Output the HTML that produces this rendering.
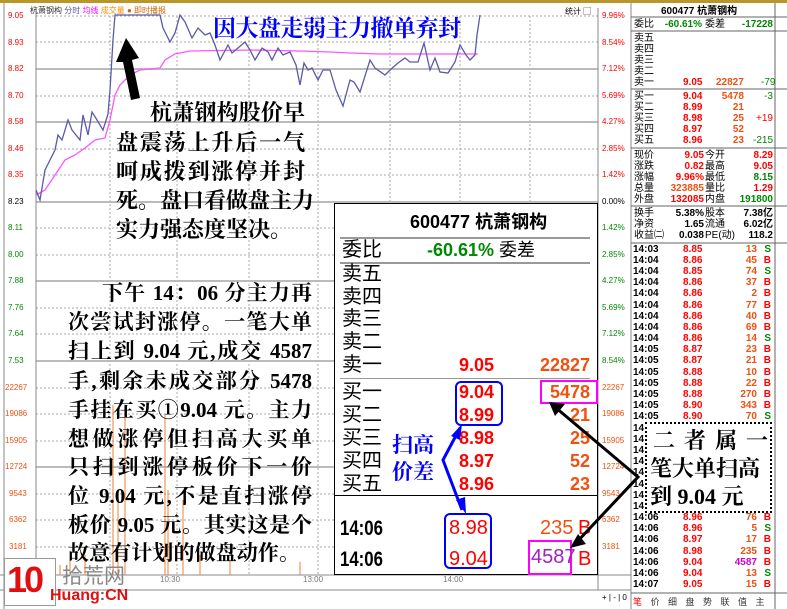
<!DOCTYPE html>
<html><head><meta charset="utf-8"><style>
*{margin:0;padding:0;box-sizing:border-box}
body{width:787px;height:609px;overflow:hidden;background:#fff;position:relative;font-family:"Liberation Sans","Noto Sans CJK SC",sans-serif}
.a{position:absolute;white-space:nowrap}
.ax{position:absolute;font-size:8px;font-family:"Liberation Sans",sans-serif}
.rp{position:absolute;font-size:10px;font-weight:bold;line-height:11px;white-space:nowrap}
.sv{font-family:"Liberation Serif","Noto Serif CJK SC",serif;font-weight:bold;color:#000}
.ln{position:absolute;font-size:22px;line-height:24px;text-align:justify;text-align-last:justify;white-space:nowrap}
.p2{font-size:21px}
.r{color:#f00}.o{color:#f05010}.g{color:#080}
.ob{position:absolute;font-size:20px;line-height:22px;height:22px;white-space:nowrap}
.op{position:absolute;font-size:18px;line-height:22px;font-weight:bold;white-space:nowrap}
table.t{position:absolute;left:633px;top:244px;border-collapse:collapse;font-size:10px;font-weight:bold}
table.t td{height:11.2px;line-height:10px;padding:0;white-space:nowrap}
</style></head><body>
<div class="a" style="left:0;top:0;width:787px;height:3px;background:#b8962a"></div>
<svg class="a" style="left:0;top:0" width="787" height="609">
<g stroke="#aaa" stroke-dasharray="2,2" stroke-width="1">
<line x1="36" y1="16" x2="598" y2="16"/><line x1="36" y1="42" x2="598" y2="42"/><line x1="36" y1="96" x2="598" y2="96"/><line x1="36" y1="149" x2="598" y2="149"/><line x1="36" y1="175" x2="598" y2="175"/><line x1="36" y1="228" x2="598" y2="228"/><line x1="36" y1="255" x2="598" y2="255"/><line x1="36" y1="308" x2="598" y2="308"/><line x1="36" y1="334" x2="598" y2="334"/><line x1="36" y1="388" x2="598" y2="388"/><line x1="36" y1="414" x2="598" y2="414"/><line x1="36" y1="441" x2="598" y2="441"/><line x1="36" y1="494" x2="598" y2="494"/><line x1="36" y1="520" x2="598" y2="520"/><line x1="36" y1="547" x2="598" y2="547"/>
<line x1="110" y1="16" x2="110" y2="575"/><line x1="177" y1="16" x2="177" y2="575"/><line x1="249" y1="16" x2="249" y2="575"/><line x1="318" y1="16" x2="318" y2="575"/><line x1="390" y1="16" x2="390" y2="575"/><line x1="460" y1="16" x2="460" y2="575"/><line x1="530" y1="16" x2="530" y2="575"/>
</g>
<g stroke="#bbb" stroke-width="2"><line x1="36" y1="69" x2="598" y2="69"/><line x1="36" y1="122" x2="598" y2="122"/><line x1="36" y1="202" x2="598" y2="202"/><line x1="36" y1="281" x2="598" y2="281"/><line x1="36" y1="361" x2="598" y2="361"/><line x1="36" y1="467" x2="598" y2="467"/></g>
<line x1="36" y1="8" x2="36" y2="590" stroke="#888"/><line x1="598" y1="8" x2="598" y2="590" stroke="#888"/>
<line x1="0" y1="575" x2="631" y2="575" stroke="#888"/><line x1="0" y1="590" x2="631" y2="590" stroke="#888"/>
<line x1="631" y1="3" x2="631" y2="609" stroke="#888"/><line x1="4" y1="3" x2="4" y2="609" stroke="#888"/>
<g stroke="#f08030" stroke-width="1">
<line x1="60" y1="575" x2="60" y2="565"/><line x1="70" y1="575" x2="70" y2="560"/><line x1="85" y1="575" x2="85" y2="555"/><line x1="113" y1="575" x2="113" y2="405"/><line x1="118" y1="575" x2="118" y2="500"/><line x1="125" y1="575" x2="125" y2="410"/><line x1="165" y1="575" x2="165" y2="415"/><line x1="168" y1="575" x2="168" y2="490"/><line x1="183" y1="575" x2="183" y2="500"/><line x1="200" y1="575" x2="200" y2="555"/><line x1="230" y1="575" x2="230" y2="560"/><line x1="300" y1="575" x2="300" y2="562"/>
</g>
<polyline fill="none" stroke="#ff55ff" stroke-width="1.3" points="36,195 45,190 55,175 65,160 75,155 85,148 95,140 105,138 110,120 115,95 120,85 125,80 130,75 140,70 160,68 165,60 175,54 190,51 250,50 300,51 330,52 350,53 380,54 420,54 478,54"/>
<polyline fill="none" stroke="#5a5aaa" stroke-width="1.3" points="36,190 40,200 45,170 50,160 55,150 58,135 62,140 68,120 72,130 80,140 83,115 88,135 92,112 97,120 103,130 108,114 110,90 113,40 115,15 160,15 163,28 170,42 175,33 180,15 185,22 192,38 198,28 205,35 210,33 215,45 220,60 228,45 232,53 238,48 245,42 250,50 255,60 262,48 268,52 272,60 278,48 283,55 290,52 296,65 300,85 304,63 308,70 312,68 318,80 323,70 330,70 336,90 343,106 350,80 354,82 360,92 370,60 375,68 385,75 390,70 398,63 405,58 410,62 418,62 424,43 430,70 435,58 440,72 448,73 455,62 460,45 466,55 470,60 475,55 477,35 480,15"/>
<polygon points="126,38 116,62 123,62 131,100 140,98 132,60 139,58" fill="#000"/>
<g stroke="#666"><line x1="631" y1="17" x2="787" y2="17"/><line x1="631" y1="31" x2="787" y2="31"/><line x1="631" y1="89" x2="787" y2="89"/><line x1="631" y1="148" x2="787" y2="148"/><line x1="631" y1="206" x2="787" y2="206"/><line x1="631" y1="243" x2="787" y2="243"/><line x1="631" y1="593" x2="787" y2="593"/><line x1="775" y1="3" x2="775" y2="609"/></g>
</svg>
<div class="a" style="left:30px;top:5px;font-size:8px;color:#333">杭萧钢构 <span style="color:#55a">分时</span> <span style="color:#f0f">均线</span> <span style="color:#f80">成交量</span> <span style="color:#c60">● 即时播报</span></div>
<div class="a" style="left:565px;top:6px;font-size:8px">统计 ▢</div>
<div class="ax r" style="left:8px;top:11px">9.05</div><div class="ax r" style="left:8px;top:38px">8.93</div><div class="ax r" style="left:8px;top:64px">8.82</div><div class="ax r" style="left:8px;top:91px">8.70</div><div class="ax r" style="left:8px;top:117px">8.58</div><div class="ax r" style="left:8px;top:144px">8.46</div><div class="ax r" style="left:8px;top:170px">8.35</div><div class="ax" style="left:8px;top:197px">8.23</div><div class="ax g" style="left:8px;top:223px">8.11</div><div class="ax g" style="left:8px;top:250px">8.00</div><div class="ax g" style="left:8px;top:276px">7.88</div><div class="ax g" style="left:8px;top:303px">7.76</div><div class="ax g" style="left:8px;top:329px">7.64</div><div class="ax g" style="left:8px;top:356px">7.53</div>
<div class="ax o" style="left:5px;top:383px">22267</div><div class="ax o" style="left:5px;top:409px">19086</div><div class="ax o" style="left:5px;top:436px">15905</div><div class="ax o" style="left:5px;top:462px">12724</div><div class="ax o" style="left:9px;top:489px">9543</div><div class="ax o" style="left:9px;top:515px">6362</div><div class="ax o" style="left:9px;top:542px">3181</div>
<div class="ax r" style="left:602px;top:11px">9.96%</div><div class="ax r" style="left:602px;top:38px">8.54%</div><div class="ax r" style="left:602px;top:64px">7.12%</div><div class="ax r" style="left:602px;top:91px">5.69%</div><div class="ax r" style="left:602px;top:117px">4.27%</div><div class="ax r" style="left:602px;top:144px">2.85%</div><div class="ax r" style="left:602px;top:170px">1.42%</div><div class="ax" style="left:602px;top:197px">0.00%</div><div class="ax g" style="left:602px;top:223px">1.42%</div><div class="ax g" style="left:602px;top:250px">2.85%</div><div class="ax g" style="left:602px;top:276px">4.27%</div><div class="ax g" style="left:602px;top:303px">5.69%</div><div class="ax g" style="left:602px;top:329px">7.12%</div><div class="ax g" style="left:602px;top:356px">8.54%</div>
<div class="ax o" style="left:602px;top:383px">22267</div><div class="ax o" style="left:602px;top:409px">19086</div><div class="ax o" style="left:602px;top:436px">15905</div><div class="ax o" style="left:602px;top:462px">12724</div><div class="ax o" style="left:602px;top:489px">9543</div><div class="ax o" style="left:602px;top:515px">6362</div><div class="ax o" style="left:602px;top:542px">3181</div>
<div class="ax" style="left:160px;top:575px;color:#777">10:30</div><div class="ax" style="left:303px;top:575px;color:#777">13:00</div><div class="ax" style="left:443px;top:575px;color:#777">14:00</div>
<div class="a" style="left:602px;top:593px;font-size:8px">+ | - | 0</div>
<div class="a sv" style="left:213px;top:10px;font-size:23px;color:#00f;letter-spacing:-0.5px">因大盘走弱主力撤单弃封</div>
<div class="ln sv" style="left:150px;top:101px;width:155px">杭萧钢构股价早</div>
<div class="ln sv" style="left:116px;top:131px;width:189px">盘震荡上升后一气</div>
<div class="ln sv" style="left:116px;top:160px;width:189px">呵成拨到涨停并封</div>
<div class="ln sv" style="left:116px;top:189px;width:189px">死。盘口看做盘主力</div>
<div class="ln sv" style="left:116px;top:218px;width:173px">实力强态度坚决。</div>
<div class="ln sv p2" style="left:102px;top:281px;width:210px">下午 14：06 分主力再</div>
<div class="ln sv p2" style="left:68px;top:310px;width:244px">次尝试封涨停。一笔大单</div>
<div class="ln sv p2" style="left:68px;top:339px;width:244px">扫上到 9.04 元,成交 4587</div>
<div class="ln sv p2" style="left:68px;top:369px;width:244px">手,剩余未成交部分 5478</div>
<div class="ln sv p2" style="left:68px;top:398px;width:244px">手挂在买①9.04 元。主力</div>
<div class="ln sv p2" style="left:68px;top:427px;width:244px">想做涨停但扫高大买单</div>
<div class="ln sv p2" style="left:68px;top:455px;width:244px">只扫到涨停板价下一价</div>
<div class="ln sv p2" style="left:68px;top:484px;width:244px">位 9.04 元,不是直扫涨停</div>
<div class="ln sv p2" style="left:68px;top:513px;width:244px">板价 9.05 元。其实这是个</div>
<div class="ln sv p2" style="left:68px;top:541px;width:232px">故意有计划的做盘动作。</div>
<div class="a" style="left:4px;top:558px;width:52px;height:48px;background:#fff;border:1px solid #999"></div>
<div class="a" style="left:7px;top:560px;font-size:36px;line-height:40px;font-weight:bold;color:#e01010;letter-spacing:-3px">10</div>
<div class="a" style="left:62px;top:560px;font-size:21px;color:#888">拾荒网</div>
<div class="a" style="left:50px;top:587px;font-size:16px;color:#e01010;font-weight:bold">Huang<span style="color:#666">:</span>CN</div>
<div class="a" style="left:334px;top:203px;width:264px;height:372px;background:#fff;border:1px solid #000"></div>
<div class="a" style="left:334px;top:495px;width:264px;height:1px;background:#000"></div>
<div class="a" style="left:340px;top:237px;width:250px;height:2px;background:#999"></div>
<div class="a" style="left:340px;top:262px;width:250px;height:2px;background:#999"></div>
<div class="a" style="left:340px;top:378px;width:250px;height:1px;background:#999"></div>
<div class="a" style="left:410px;top:211px;font-size:18px;line-height:22px;font-weight:bold">600477 杭萧钢构</div>
<div class="ob" style="left:342px;top:239px">委比</div>
<div class="op g" style="left:427px;top:239px">-60.61% <span style="color:#000;font-weight:normal">委差</span></div>
<div class="ob" style="left:342px;top:263px">卖五</div>
<div class="ob" style="left:342px;top:286px">卖四</div>
<div class="ob" style="left:342px;top:308px">卖三</div>
<div class="ob" style="left:342px;top:331px">卖二</div>
<div class="ob" style="left:342px;top:354px">卖一</div>
<div class="ob" style="left:342px;top:381px">买一</div>
<div class="ob" style="left:342px;top:404px">买二</div>
<div class="ob" style="left:342px;top:427px">买三</div>
<div class="ob" style="left:342px;top:450px">买四</div>
<div class="ob" style="left:342px;top:473px">买五</div>
<div class="op r" style="left:459px;top:354px">9.05</div>
<div class="op r" style="left:459px;top:381px">9.04</div>
<div class="op r" style="left:459px;top:404px">8.99</div>
<div class="op r" style="left:459px;top:427px">8.98</div>
<div class="op r" style="left:459px;top:450px">8.97</div>
<div class="op r" style="left:459px;top:473px">8.96</div>
<div class="op o" style="left:520px;top:354px;width:70px;text-align:right">22827</div>
<div class="op o" style="left:520px;top:381px;width:70px;text-align:right">5478</div>
<div class="op o" style="left:520px;top:404px;width:70px;text-align:right">21</div>
<div class="op o" style="left:520px;top:427px;width:70px;text-align:right">25</div>
<div class="op o" style="left:520px;top:450px;width:70px;text-align:right">52</div>
<div class="op o" style="left:520px;top:473px;width:70px;text-align:right">23</div>
<div class="a" style="left:455px;top:381px;width:48px;height:45px;border:2px solid #00f;border-radius:6px"></div>
<div class="a" style="left:540px;top:380px;width:58px;height:24px;border:2px solid #f0f"></div>
<div class="a sv" style="left:392px;top:432px;font-size:21px;line-height:27px;color:#00f">扫高<br>价差</div>
<div class="a" style="left:340px;top:513px;font-size:21px;font-weight:bold;line-height:31px;transform:scaleX(.8);transform-origin:left">14:06<br>14:06</div>
<div class="a" style="left:444px;top:513px;width:48px;height:56px;border:2px solid #00f;border-radius:6px"></div>
<div class="a r" style="left:449px;top:513px;font-size:20px;line-height:31px">8.98<br>9.04</div>
<div class="a o" style="left:540px;top:513px;font-size:20px;line-height:31px">235</div>
<div class="a r" style="left:578px;top:513px;font-size:20px;line-height:31px">B<br>B</div>
<div class="a" style="left:528px;top:540px;width:44px;height:35px;border:2px solid #f0f"></div>
<div class="a" style="left:531px;top:544px;font-size:20px;line-height:26px;color:#a020c0">4587</div>
<svg class="a" style="left:0;top:0" width="787" height="609">
<polyline points="460,428 443,460 462,510" fill="none" stroke="#00f" stroke-width="3"/>
<polygon points="462,424 451,436 460,440" fill="#00f"/><polygon points="466,514 456,500 465,497" fill="#00f"/>
<polyline points="555,407 638,477 575,544" fill="none" stroke="#000" stroke-width="3"/>
<polygon points="549,402 565,404 555,416" fill="#000"/><polygon points="570,548 578,534 586,544" fill="#000"/>
</svg>
<div class="rp" style="left:661px;top:6px">600477 杭萧钢构</div>
<div class="rp" style="left:634px;top:19px;font-weight:normal">委比</div><div class="rp g" style="left:662px;top:19px;width:40px;text-align:right">-60.61%</div><div class="rp" style="left:705px;top:19px;font-weight:normal">委差</div><div class="rp g" style="left:733px;top:19px;width:40px;text-align:right">-17228</div>
<div class="rp" style="left:634px;top:33px;font-weight:normal">卖五<br>卖四<br>卖三<br>卖二<br>卖一</div>
<div class="rp r" style="left:683px;top:77px">9.05</div><div class="rp o" style="left:716px;top:77px">22827</div><div class="rp g" style="left:761px;top:77px;font-weight:normal">-79</div>
<div class="rp" style="left:634px;top:91px;font-weight:normal">买一<br>买二<br>买三<br>买四<br>买五</div>
<div class="rp r" style="left:683px;top:91px">9.04<br>8.99<br>8.98<br>8.97<br>8.96</div>
<div class="rp o" style="left:710px;top:91px;width:34px;text-align:right">5478<br>21<br>25<br>52<br>23</div>
<div class="rp" style="left:746px;top:91px;width:27px;text-align:right;font-weight:normal"><span class="g">-3</span><br>&nbsp;<br><span class="r">+19</span><br>&nbsp;<br><span class="g">-215</span></div>
<div class="rp" style="left:634px;top:150px;font-weight:normal">现价<br>涨跌<br>涨幅<br>总量<br>外盘</div>
<div class="rp" style="left:664px;top:150px;width:40px;text-align:right"><span class="r">9.05</span><br><span class="r">0.82</span><br><span class="r">9.96%</span><br><span class="o">323885</span><br><span class="r">132085</span></div>
<div class="rp" style="left:705px;top:150px;font-weight:normal">今开<br>最高<br>最低<br>量比<br>内盘</div>
<div class="rp" style="left:733px;top:150px;width:40px;text-align:right"><span class="r">8.29</span><br><span class="r">9.05</span><br><span class="g">8.15</span><br><span class="r">1.29</span><br><span class="g">191800</span></div>
<div class="rp" style="left:634px;top:208px;font-weight:normal">换手<br>净资<br>收益㈡</div>
<div class="rp" style="left:664px;top:208px;width:40px;text-align:right">5.38%<br>1.65<br>0.038</div>
<div class="rp" style="left:705px;top:208px;font-weight:normal">股本<br>流通<br>PE(动)</div>
<div class="rp" style="left:733px;top:208px;width:40px;text-align:right">7.38亿<br>6.02亿<br>118.2</div>
<table class="t">
<tr><td style="width:50px">14:03</td><td class="r" style="width:28px">8.85</td><td class="o" style="width:46px;text-align:right">13</td><td class="g" style="width:14px;text-align:right">S</td></tr>
<tr><td>14:04</td><td class="r">8.86</td><td class="o" align="right">45</td><td class="r" align="right">B</td></tr>
<tr><td>14:04</td><td class="r">8.85</td><td class="o" align="right">74</td><td class="g" align="right">S</td></tr>
<tr><td>14:04</td><td class="r">8.86</td><td class="o" align="right">37</td><td class="r" align="right">B</td></tr>
<tr><td>14:04</td><td class="r">8.86</td><td class="o" align="right">2</td><td class="r" align="right">B</td></tr>
<tr><td>14:04</td><td class="r">8.86</td><td class="o" align="right">77</td><td class="r" align="right">B</td></tr>
<tr><td>14:04</td><td class="r">8.86</td><td class="o" align="right">40</td><td class="r" align="right">B</td></tr>
<tr><td>14:04</td><td class="r">8.86</td><td class="o" align="right">69</td><td class="r" align="right">B</td></tr>
<tr><td>14:04</td><td class="r">8.86</td><td class="o" align="right">14</td><td class="g" align="right">S</td></tr>
<tr><td>14:05</td><td class="r">8.87</td><td class="o" align="right">23</td><td class="r" align="right">B</td></tr>
<tr><td>14:05</td><td class="r">8.87</td><td class="o" align="right">21</td><td class="r" align="right">B</td></tr>
<tr><td>14:05</td><td class="r">8.88</td><td class="o" align="right">10</td><td class="r" align="right">B</td></tr>
<tr><td>14:05</td><td class="r">8.88</td><td class="o" align="right">22</td><td class="r" align="right">B</td></tr>
<tr><td>14:05</td><td class="r">8.88</td><td class="o" align="right">270</td><td class="r" align="right">B</td></tr>
<tr><td>14:05</td><td class="r">8.90</td><td class="o" align="right">343</td><td class="r" align="right">B</td></tr>
<tr><td>14:05</td><td class="r">8.90</td><td class="o" align="right">70</td><td class="g" align="right">S</td></tr>
<tr><td>14:05</td><td class="r">8.91</td><td class="o" align="right">50</td><td class="r" align="right">B</td></tr>
<tr><td>14:05</td><td class="r">8.92</td><td class="o" align="right">30</td><td class="r" align="right">B</td></tr>
<tr><td>14:05</td><td class="r">8.93</td><td class="o" align="right">20</td><td class="r" align="right">B</td></tr>
<tr><td>14:05</td><td class="r">8.94</td><td class="o" align="right">15</td><td class="r" align="right">B</td></tr>
<tr><td>14:05</td><td class="r">8.95</td><td class="o" align="right">40</td><td class="r" align="right">B</td></tr>
<tr><td>14:06</td><td class="r">8.95</td><td class="o" align="right">10</td><td class="r" align="right">B</td></tr>
<tr><td>14:06</td><td class="r">8.95</td><td class="o" align="right">25</td><td class="r" align="right">B</td></tr>
<tr><td>14:06</td><td class="r">8.96</td><td class="o" align="right">12</td><td class="r" align="right">B</td></tr>
<tr><td>14:06</td><td class="r">8.96</td><td class="o" align="right">76</td><td class="r" align="right">B</td></tr>
<tr><td>14:06</td><td class="r">8.96</td><td class="o" align="right">5</td><td class="g" align="right">S</td></tr>
<tr><td>14:06</td><td class="r">8.97</td><td class="o" align="right">17</td><td class="r" align="right">B</td></tr>
<tr><td>14:06</td><td class="r">8.98</td><td class="o" align="right">235</td><td class="r" align="right">B</td></tr>
<tr><td>14:06</td><td class="r">9.04</td><td align="right" style="color:#c0c">4587</td><td class="r" align="right">B</td></tr>
<tr><td>14:06</td><td class="r">9.04</td><td class="o" align="right">13</td><td class="g" align="right">S</td></tr>
<tr><td>14:07</td><td class="r">9.05</td><td class="o" align="right">15</td><td class="r" align="right">B</td></tr>
</table>
<div class="a" style="left:645px;top:422px;width:127px;height:91px;background:#fff;border:2px dotted #000"></div>
<div class="a sv" style="left:653px;top:427px;font-size:22px;line-height:28px;width:115px;text-align:justify;text-align-last:justify">二 者 属 一</div>
<div class="a sv" style="left:650px;top:455px;font-size:22px;line-height:28px">笔大单扫高</div>
<div class="a sv" style="left:650px;top:483px;font-size:22px;line-height:28px">到 9.04 元</div>
<div class="a" style="left:633px;top:595px;font-size:9px;word-spacing:6px;color:#333;background:#fff"><span class="r">笔</span> 价 细 盘 势 联 值 主</div>
</body></html>
